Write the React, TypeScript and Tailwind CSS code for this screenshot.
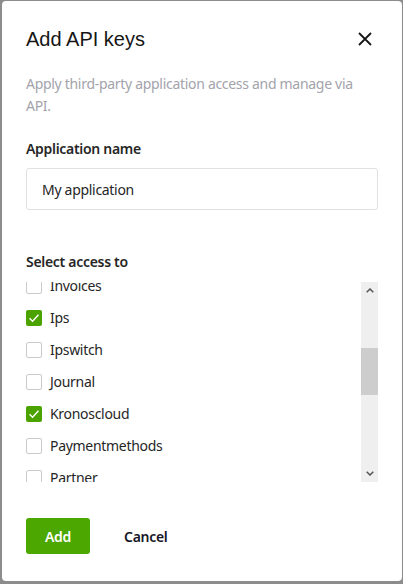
import { useState } from 'react';

const items = [
  { name: 'Invoices', checked: false },
  { name: 'Ips', checked: true },
  { name: 'Ipswitch', checked: false },
  { name: 'Journal', checked: false },
  { name: 'Kronoscloud', checked: true },
  { name: 'Paymentmethods', checked: false },
  { name: 'Partner', checked: false },
  { name: 'Projects', checked: false },
];

function Checkbox({ checked, onChange }: { checked: boolean; onChange: () => void }) {
  return (
    <button
      type="button"
      role="checkbox"
      aria-checked={checked}
      onClick={onChange}
      className={
        checked
          ? 'flex h-4 w-4 shrink-0 items-center justify-center rounded-[2px] bg-[#4ca300]'
          : 'flex h-4 w-4 shrink-0 items-center justify-center rounded-[2px] border border-[#c9c9ce] bg-white'
      }
    >
      {checked && (
        <svg viewBox="0 0 16 16" className="h-4 w-4" fill="none">
          <path d="M3.5 8.2 6.6 11.2 12.5 4.8" stroke="white" strokeWidth="1.4" />
        </svg>
      )}
    </button>
  );
}

export default function App() {
  const [list, setList] = useState(items);
  const toggle = (i: number) =>
    setList((l) => l.map((it, j) => (j === i ? { ...it, checked: !it.checked } : it)));

  return (
    <div className="flex h-[584px] w-[403px] bg-[#8c8c8c] pb-[3px] pl-[2px] pr-[1px] pt-[1px] font-['Noto_Sans',sans-serif] tracking-[-0.3px]">
      <div className="flex flex-1 flex-col rounded-[4px] bg-white px-[24px] pt-[25px]">
        <div className="flex items-center justify-between">
          <h2 className="font-['Liberation_Sans',sans-serif] text-[20px] leading-[26px] tracking-normal text-[#161616]">
            Add API keys
          </h2>
          <button type="button" className="mr-[5px] text-[#161616]">
            <svg viewBox="0 0 16 16" className="h-[16px] w-[16px]" fill="none">
              <path d="M2 2 14 14M14 2 2 14" stroke="currentColor" strokeWidth="1.8" />
            </svg>
          </button>
        </div>

        <p className="mt-[21px] text-[14px] leading-[22px] text-[#a3a3ab]">
          Apply third-party application access and manage via API.
        </p>

        <label className="mt-[22px] text-[14px] font-semibold leading-[20px] text-[#262626]">
          Application name
        </label>
        <input
          defaultValue="My application"
          className="mt-[9px] h-[42px] rounded-[3px] border border-[#e1e1e4] px-[15px] text-[14px] text-[#262626] outline-none"
        />

        <div className="mt-[42px] text-[14px] font-semibold leading-[20px] text-[#262626]">
          Select access to
        </div>

        <div className="mt-[10px] flex h-[200px] gap-[6px]">
          <div className="flex-1 overflow-hidden">
            <ul className="mt-[-12px]">
              {list.map((it, i) => (
                <li key={it.name} className="flex h-[32px] items-center gap-[8px]">
                  <Checkbox checked={it.checked} onChange={() => toggle(i)} />
                  <span className="text-[14px] leading-[20px] text-[#262626]">{it.name}</span>
                </li>
              ))}
            </ul>
          </div>
          <div className="flex w-[17px] flex-col bg-[#efefef]">
            <div className="flex h-[17px] items-center justify-center">
              <svg viewBox="0 0 8 5" className="h-[5px] w-[8px]" fill="none">
                <path d="M0.7 4.3 4 1 7.3 4.3" stroke="#555" strokeWidth="1.5" />
              </svg>
            </div>
            <div className="mt-[49px] h-[47px] bg-[#cdcdcd]" />
            <div className="flex-1" />
            <div className="flex h-[17px] items-center justify-center">
              <svg viewBox="0 0 8 5" className="h-[5px] w-[8px]" fill="none">
                <path d="M0.7 0.7 4 4 7.3 0.7" stroke="#555" strokeWidth="1.5" />
              </svg>
            </div>
          </div>
        </div>

        <div className="mt-[36px] flex items-center gap-[34px]">
          <button
            type="button"
            className="h-[36px] w-[64px] rounded-[3px] bg-[#4ca800] text-[14px] font-semibold text-white"
          >
            Add
          </button>
          <button type="button" className="text-[14px] font-semibold text-[#161628]">
            Cancel
          </button>
        </div>
      </div>
    </div>
  );
}
